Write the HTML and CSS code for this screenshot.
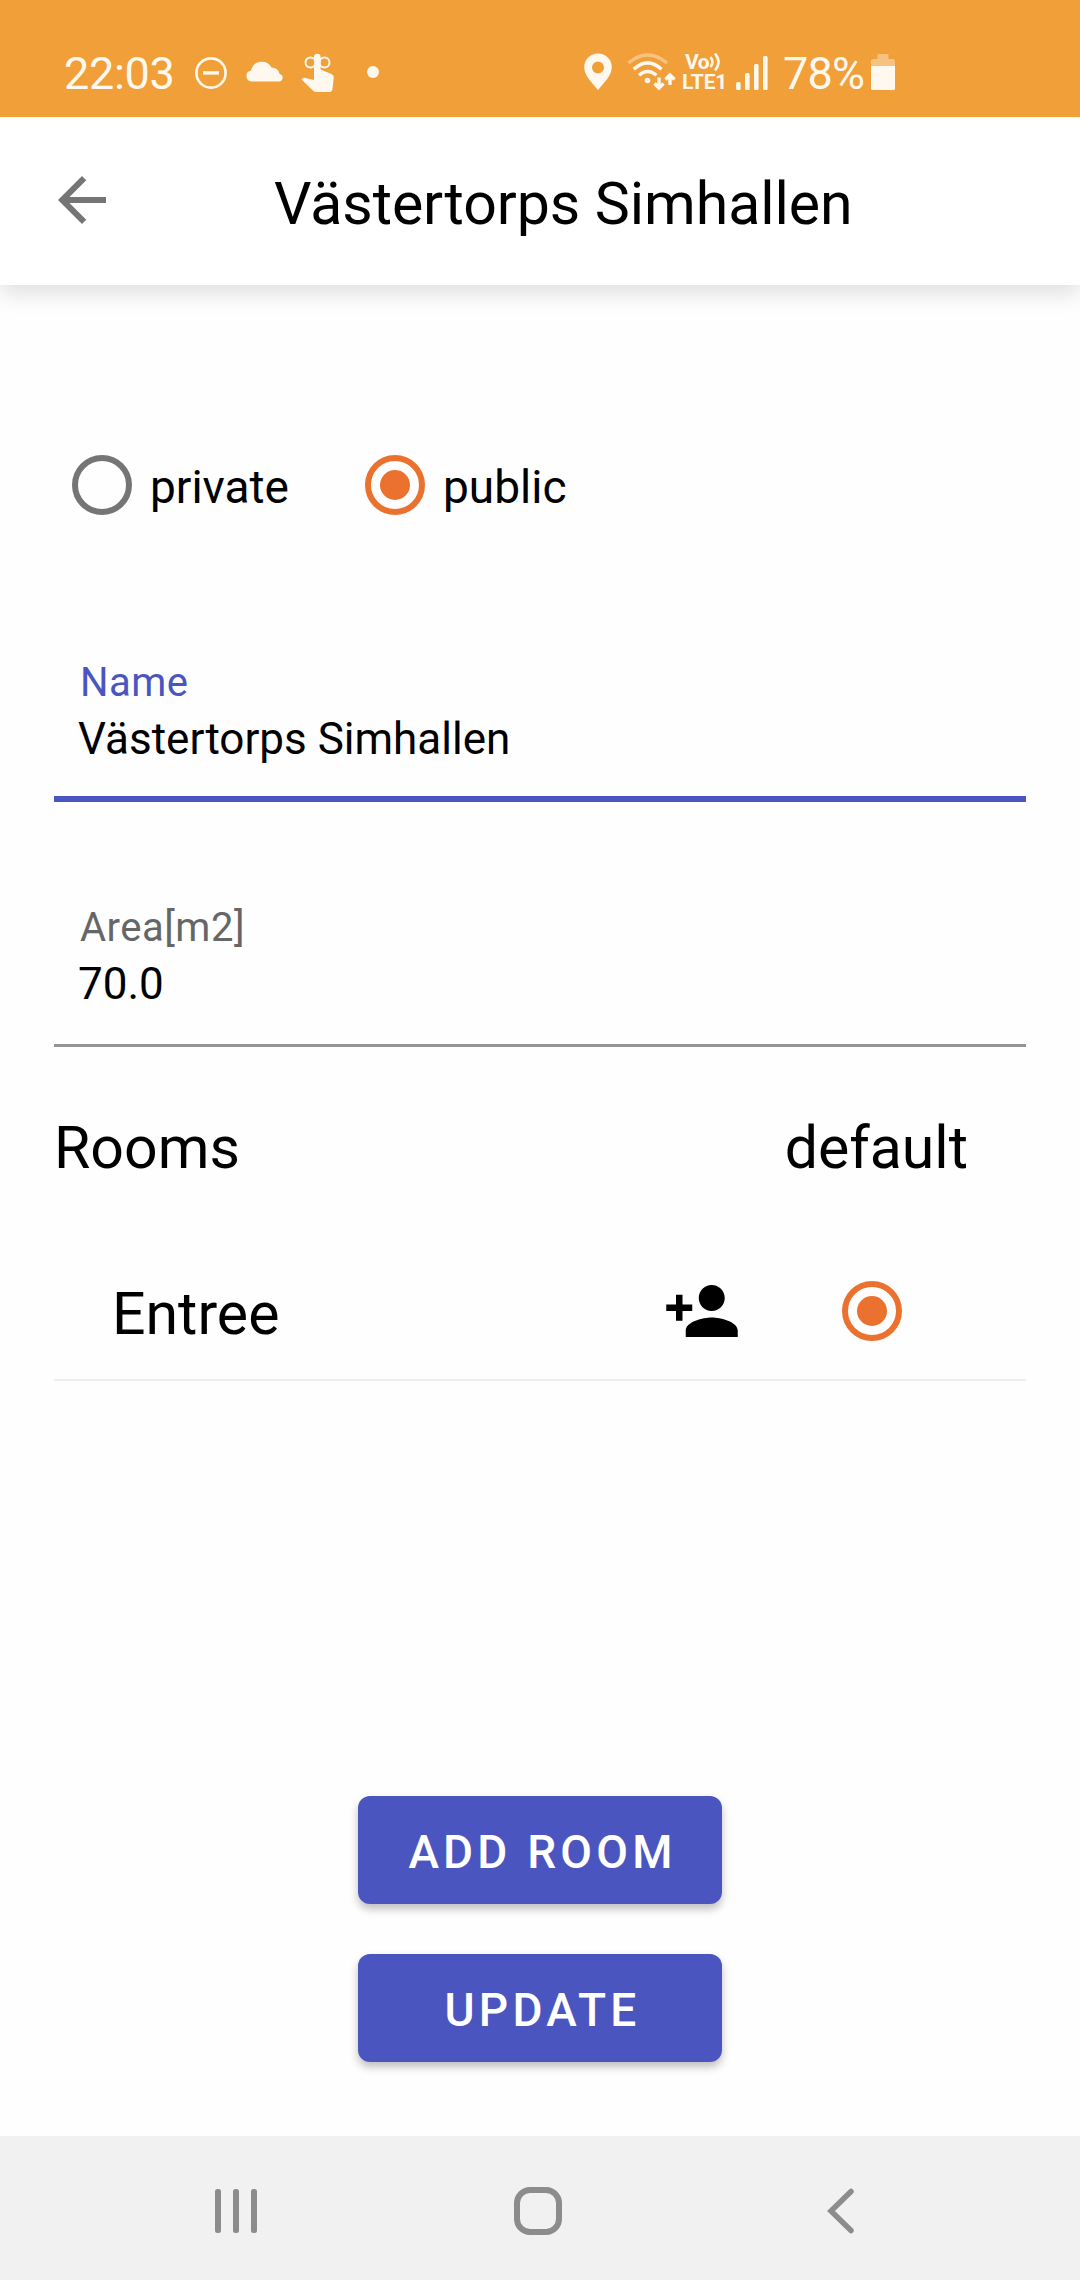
FILE: index.html
```html
<!DOCTYPE html>
<html lang="en">
<head>
    <meta charset="UTF-8">
    <meta name="viewport" content="width=device-width, initial-scale=1.0">
    <title>Västertorps Simhallen</title>
    <link rel="stylesheet" href="styles.css">
</head>
<body>
    <div class="status-bar">
        <span class="clock">22:03</span>
        <svg class="icon-dnd" width="34" height="34" viewBox="0 0 34 34">
            <circle cx="17" cy="17" r="14.6" fill="none" stroke="currentColor" stroke-width="2.6"/>
            <rect x="9" y="15.2" width="16" height="3.4" fill="currentColor"/>
        </svg>
        <svg class="icon-cloud" width="38" height="22" viewBox="0 0 38 22">
            <path fill="currentColor" d="M5.5 21.5A5.5 5.5 0 0 1 5 10.6A11 11 0 0 1 25.5 7.5A8.5 8.5 0 0 1 33.7 14A3.9 3.9 0 0 1 34 21.5Z"/>
        </svg>
        <svg class="icon-hand" width="34" height="40" viewBox="0 0 34 40">
            <circle cx="9.5" cy="9.5" r="5" fill="none" stroke="currentColor" stroke-width="2"/>
            <circle cx="23.5" cy="9.5" r="5" fill="none" stroke="currentColor" stroke-width="2"/>
            <path fill="currentColor" d="M13 4a3.3 3.3 0 0 1 6.6 0v12.6L30.5 21q2.5 1 2.3 3.5L31.5 36q-.4 3-3 3H15q-1.5 0-2.6-1L.5 26.4l1-1q.8-.8 2-.6L13 27z"/>
        </svg>
        <span class="dot"></span>
        <svg class="icon-pin" width="28" height="38" viewBox="0 0 28 38">
            <path fill="currentColor" fill-rule="evenodd" d="M14 .5A13.8 13.8 0 0 0 .2 14.3C.2 22 7 29 14 37C21 29 27.8 22 27.8 14.3A13.8 13.8 0 0 0 14 .5zM14 8.5a6 6 0 1 1 0 12a6 6 0 1 1 0-12z"/>
        </svg>
        <svg class="icon-wifi" width="50" height="38" viewBox="0 0 50 38">
            <g fill="none" stroke="currentColor" stroke-width="3.4">
                <path opacity=".4" d="M1.5 10Q20.5-6 40 10"/>
                <path d="M6.8 16.3Q20.5 3.5 34.5 16.3"/>
                <path d="M12 22.3Q20.5 14.5 29.5 22.3"/>
            </g>
            <circle cx="20.5" cy="27.5" r="2.8" fill="currentColor"/>
            <path fill="none" stroke="currentColor" stroke-width="3.4" d="M32 24.5v10M27.5 30.5l4.5 4.5l4.5-4.5M43 32V22M38.5 26.5L43 22l4.5 4.5"/>
        </svg>
        <div class="volte">
            <span class="volte-top">Vo<svg width="12" height="20" viewBox="0 0 12 20" fill="none" stroke="currentColor" stroke-width="2.6">
                <path d="M1.5 5Q5.5 10 1.5 15M6 1.5Q13 10 6 18.5"/>
            </svg></span>
            <span class="volte-bottom">LTE1</span>
        </div>
        <svg class="icon-signal" width="32" height="34" viewBox="0 0 32 34" fill="currentColor">
            <rect x="0" y="26" width="4.6" height="8" rx="1.5"/>
            <rect x="9" y="17" width="4.6" height="17" rx="1.5"/>
            <rect x="18" y="8" width="4.6" height="26" rx="1.5"/>
            <rect x="27" y="0" width="4.6" height="34" rx="1.5"/>
        </svg>
        <span class="percent">78%</span>
        <svg class="icon-battery" width="24" height="36" viewBox="0 0 24 36" fill="currentColor">
            <path opacity=".4" d="M6.500 1q0-1 1-1h9q1 0 1 1v4H22q2 0 2 2v5H0V7q0-2 2-2h4.500z"/>
            <path d="M0 12h24v22.500q0 1.500-1.500 1.500h-21Q0 36 0 34.500z"/>
        </svg>
    </div>

    <header class="app-bar">
        <svg class="back" width="72" height="72" viewBox="0 0 24 24">
            <path fill="currentColor" d="M20 11H7.830l5.590-5.590L12 4l-8 8 8 8 1.410-1.410L7.830 13H20v-2z"/>
        </svg>
        <h1 class="title">Västertorps Simhallen</h1>
    </header>

    <main class="content">
        <div class="radio-group">
            <label class="radio-option"><span class="radio"></span><span class="radio-label">private</span></label>
            <label class="radio-option"><span class="radio checked"></span><span class="radio-label">public</span></label>
        </div>

        <div class="field focused">
            <div class="field-label">Name</div>
            <div class="field-value">Västertorps Simhallen</div>
        </div>

        <div class="field">
            <div class="field-label">Area[m2]</div>
            <div class="field-value">70.0</div>
        </div>

        <div class="rooms-header">
            <span>Rooms</span>
            <span>default</span>
        </div>

        <div class="room">
            <span class="room-name">Entree</span>
            <svg class="person-add" width="78" height="78" viewBox="0 0 24 24">
                <path d="M15 12c2.210 0 4-1.790 4-4s-1.790-4-4-4-4 1.790-4 4 1.790 4 4 4zm-9-2V7H4v3H1v2h3v3h2v-3h3v-2H6zm9 4c-2.670 0-8 1.340-8 4v2h16v-2c0-2.660-5.330-4-8-4z"/>
            </svg>
            <span class="radio checked"></span>
        </div>

        <div class="actions">
            <button class="btn">ADD ROOM</button>
            <button class="btn">UPDATE</button>
        </div>
    </main>

    <nav class="nav-bar">
        <svg class="nav-recents" width="42" height="44" viewBox="0 0 42 44" fill="currentColor">
            <rect x="0" y="0" width="6" height="44" rx="2.5"/>
            <rect x="18" y="0" width="6" height="44" rx="2.5"/>
            <rect x="36" y="0" width="6" height="44" rx="2.5"/>
        </svg>
        <svg class="nav-home" width="48" height="48" viewBox="0 0 48 48">
            <rect x="3" y="3" width="42" height="42" rx="13" fill="none" stroke="currentColor" stroke-width="6"/>
        </svg>
        <svg class="nav-back" width="27" height="46" viewBox="0 0 27 46">
            <path d="M24 3.5L4 23l20 19.5" fill="none" stroke="currentColor" stroke-width="5.5" stroke-linecap="round"/>
        </svg>
    </nav>
</body>
</html>
```
FILE: styles.css
```css
* { box-sizing: border-box; }
body { margin: 0; width: 1080px; height: 2280px; display: flex; flex-direction: column; background: #fefefe; color: #000; font-family: Roboto, sans-serif; overflow: hidden; }
svg { display: block; flex: none; }

/* status bar */
.status-bar { position: relative; z-index: 1; height: 117px; flex: none; padding: 27px 0 0 64px; display: flex; align-items: center; background: #f19f38; color: #fff8ee; white-space: nowrap; }
.clock { width: 130px; font-size: 45px; line-height: 52px; letter-spacing: -0.3px; padding-top: 3px; }
.icon-dnd { margin-top: 2px; }
.icon-cloud { margin-left: 18px; margin-top: -2px; }
.icon-hand { margin-left: 17px; margin-top: 2px; }
.dot { width: 12px; height: 12px; margin-left: 32px; border-radius: 50%; background: currentColor; }
.icon-pin { margin-left: 205px; }
.icon-wifi { margin-left: 15px; }
.volte { width: 44px; margin-left: 5px; font-weight: 700; font-size: 21px; line-height: 20px; }
.volte-top { display: flex; align-items: center; height: 20px; padding-left: 3px; letter-spacing: -0.5px; }
.volte-bottom { display: block; letter-spacing: -0.2px; }
.icon-signal { margin-left: 10px; margin-top: 2px; }
.percent { width: 88px; margin-left: 15px; font-size: 45px; line-height: 52px; letter-spacing: -0.8px; padding-top: 3px; }

/* app bar */
.app-bar { height: 168px; flex: none; padding-left: 46px; display: flex; align-items: center; background: #fff; box-shadow: 0 8px 22px rgba(0, 0, 0, 0.13); }
.back { color: #757575; margin-top: -2px; }
.title { margin: 0 0 0 156px; padding-top: 5px; font-size: 59px; font-weight: 400; line-height: 70px; letter-spacing: -0.05px; white-space: nowrap; }

.content { flex: 1; padding: 170px 54px 74px; display: flex; flex-direction: column; }

/* radios */
.radio-group { display: flex; height: 60px; padding-left: 18px; }
.radio-option { display: flex; align-items: center; width: 293px; }
.radio { width: 60px; height: 60px; flex: none; border: 6px solid #757575; border-radius: 50%; display: flex; align-items: center; justify-content: center; }
.radio.checked { border-color: #eb722e; }
.radio.checked::after { content: ""; width: 30px; height: 30px; border-radius: 50%; background: #eb722e; }
.radio-label { margin-left: 18px; padding-top: 3px; font-size: 46px; line-height: 54px; }

/* text fields */
.field { margin-top: 102px; padding: 0 24px 33px; border-bottom: 3px solid #949494; }
.field-label { padding-left: 2px; font-size: 40px; line-height: 47px; color: #666; letter-spacing: 0.5px; }
.field-value { margin-top: 7px; font-size: 44px; line-height: 53px; }
.focused { margin-top: 144px; padding-bottom: 30px; border-bottom: 6px solid #4b55bf; }
.focused .field-label { color: #4b55bf; }

/* rooms */
.rooms-header { display: flex; justify-content: space-between; margin-top: 66px; padding-right: 58px; font-size: 59px; line-height: 70px; }
.room { display: flex; align-items: center; height: 140px; margin-top: 58px; padding: 2px 124px 0 58px; border-bottom: 2px solid #eee; }
.room-name { flex: 1; padding-top: 5px; font-size: 59px; line-height: 70px; }
.person-add { margin-right: 101px; }

/* buttons */
.actions { margin-top: auto; display: flex; flex-direction: column; align-items: center; gap: 50px; }
.btn { width: 364px; height: 108px; padding: 4px 0 0 5px; border: none; border-radius: 12px; background: #4b55bf; color: #fff; font-family: inherit; font-size: 46px; font-weight: 500; letter-spacing: 4.2px; white-space: nowrap; box-shadow: 0 5px 9px rgba(0, 0, 0, 0.25); }

/* system navigation */
.nav-bar { height: 144px; flex: none; display: flex; align-items: center; padding: 6px 0 0 215px; background: #f1f1f1; color: #8c8c8c; }
.nav-home { margin-left: 257px; }
.nav-back { margin-left: 265px; }
```
